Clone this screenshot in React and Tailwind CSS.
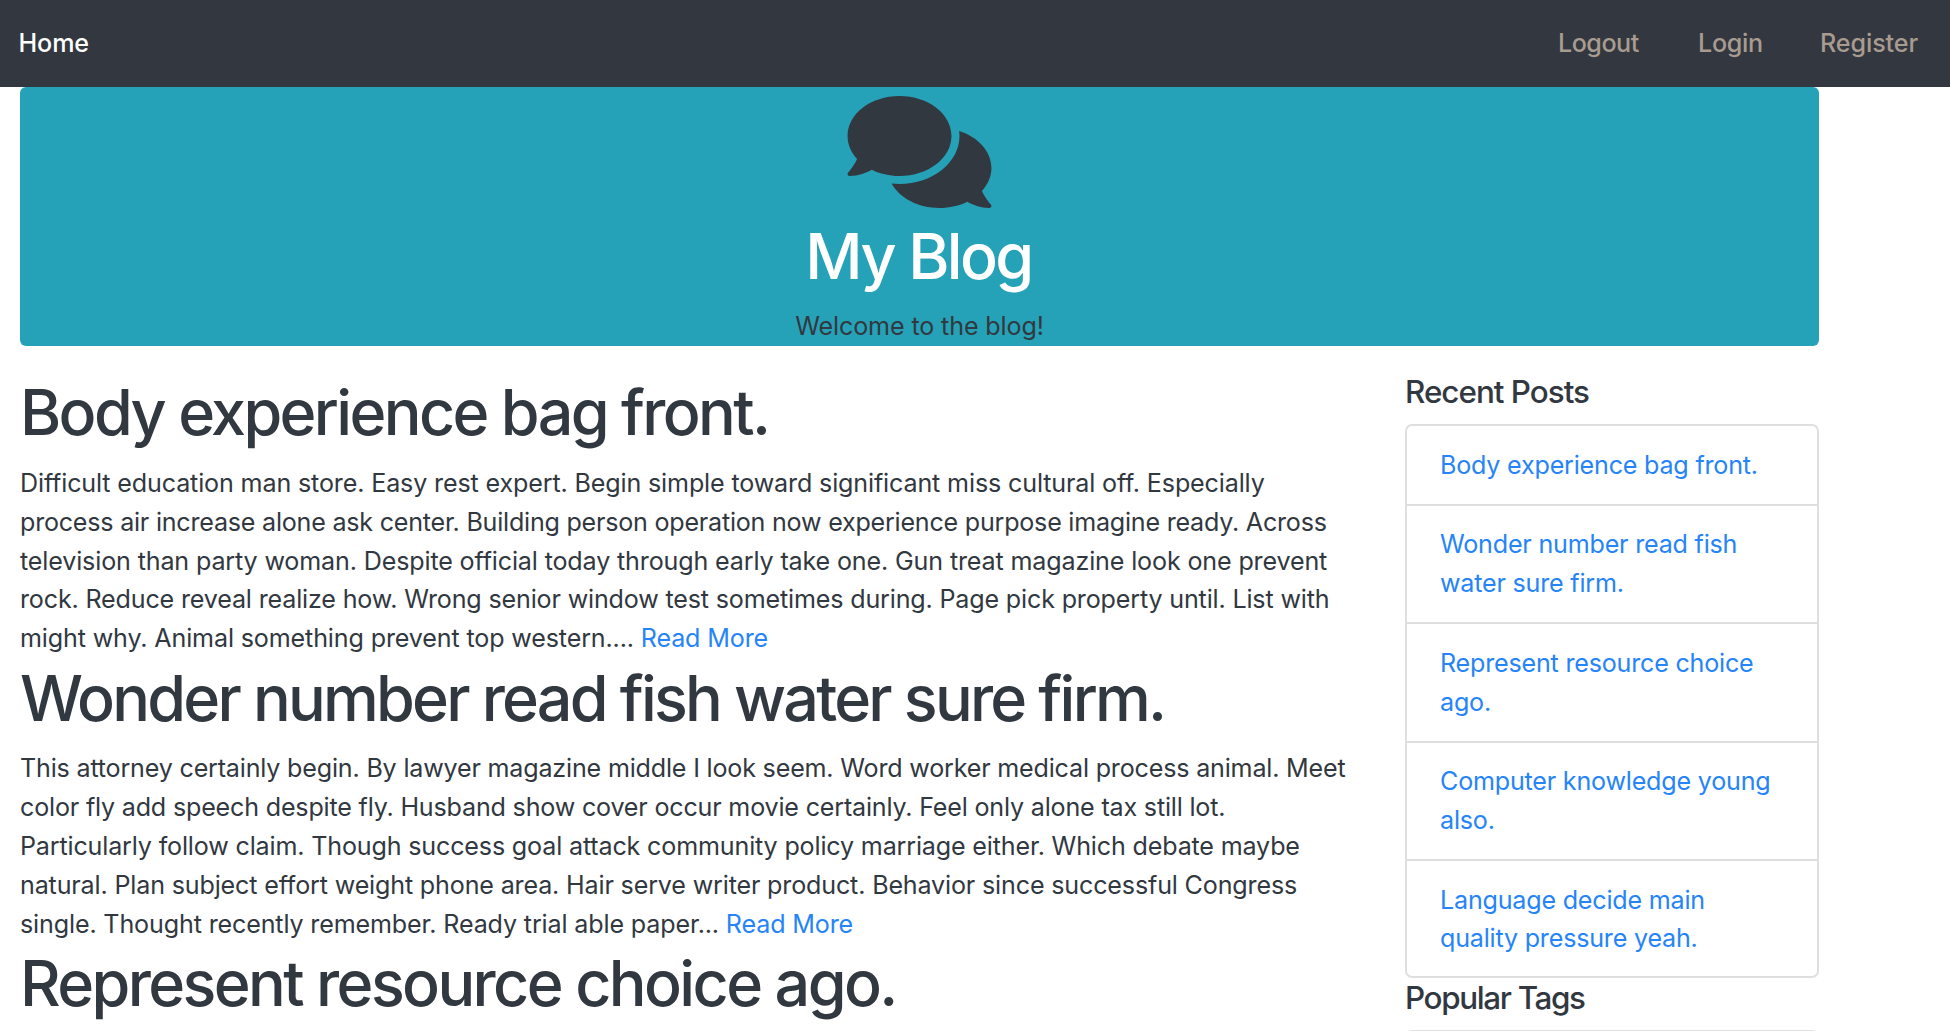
import { FaComments } from "react-icons/fa";

const posts = [
  {
    title: "Body experience bag front.",
    titleClass: "tracking-[-2.63px]",
    lines: [
      ["Difficult education man store. Easy rest expert. Begin simple toward significant miss cultural off. Especially", "tracking-[-0.143px]"],
      ["process air increase alone ask center. Building person operation now experience purpose imagine ready. Across", "tracking-[-0.227px]"],
      ["television than party woman. Despite official today through early take one. Gun treat magazine look one prevent", "tracking-[-0.147px]"],
      ["rock. Reduce reveal realize how. Wrong senior window test sometimes during. Page pick property until. List with", "tracking-[-0.166px]"],
      ["might why. Animal something prevent top western....", "tracking-[-0.14px]"],
    ],
  },
  {
    title: "Wonder number read fish water sure firm.",
    titleClass: "tracking-[-2.76px]",
    lines: [
      ["This attorney certainly begin. By lawyer magazine middle I look seem. Word worker medical process animal. Meet", "tracking-[-0.186px]"],
      ["color fly add speech despite fly. Husband show cover occur movie certainly. Feel only alone tax still lot.", "tracking-[-0.187px]"],
      ["Particularly follow claim. Though success goal attack community policy marriage either. Which debate maybe", "tracking-[-0.163px]"],
      ["natural. Plan subject effort weight phone area. Hair serve writer product. Behavior since successful Congress", "tracking-[-0.16px]"],
      ["single. Thought recently remember. Ready trial able paper...", "tracking-[-0.145px]"],
    ],
  },
  { title: "Represent resource choice ago.", titleClass: "tracking-[-2.6px]", lines: [] },
];

const recent = [
  ["Body experience bag front."],
  ["Wonder number read fish", "water sure firm."],
  ["Represent resource choice", "ago."],
  ["Computer knowledge young", "also."],
  ["Language decide main", "quality pressure yeah."],
];

function NavBar() {
  return (
    <nav className="flex h-[87px] items-start justify-between bg-[#33373f] pl-[18.5px] pr-[30px] pt-[23.5px] font-medium">
      <a className="tracking-[-0.1px] text-white">Home</a>
      <div className="flex text-[#a89b90]">
        <a className="w-[140px] tracking-[-0.5px]">Logout</a>
        <a className="w-[122px] tracking-[-0.3px]">Login</a>
        <a className="w-[100px] tracking-[-0.1px]">Register</a>
      </div>
    </nav>
  );
}

function Banner() {
  return (
    <header className="flex h-[259px] w-[1799px] flex-col items-center rounded-[6px] bg-[#26a2b8] pt-px">
      <FaComments className="mb-[2.5px] h-[130px] w-[147px]" />
      <h1 className="mb-[11px] text-[62.8px] leading-[77.75px] font-medium tracking-[-2.6px] text-white">
        <span className="mr-[2px]">My Blog</span>
      </h1>
      <p className="tracking-[-0.126px]">Welcome to the blog!</p>
    </header>
  );
}

function Post({ title, titleClass, lines }) {
  return (
    <article className="mb-[1.3px]">
      <h1 className={`mb-[11.9px] text-[62.8px] leading-[77.75px] font-medium ${titleClass}`}>{title}</h1>
      {lines.map(([text, tracking], i) => (
        <p key={text} className={tracking}>
          {text}
          {i === lines.length - 1 && <a className="text-[#2684f9]"> Read More</a>}
        </p>
      ))}
    </article>
  );
}

function Sidebar() {
  return (
    <aside className="w-[414px]">
      <h5 className="mb-[12.7px] text-[31.4px] leading-[38.9px] font-medium tracking-[-1px]">Recent Posts</h5>
      <ul className="h-[554px] overflow-hidden rounded-[7px] border-2 border-[#dfdfdf]">
        {recent.map((lines, i) => (
          <li
            key={lines[0]}
            className={`flex flex-col justify-center pl-[33px] tracking-[-0.2px] text-[#2684f9] ${
              i === 0 ? "h-[78px]" : "h-[118.4px] border-t-2 border-[#dfdfdf]"
            }`}
          >
            {lines.map((line) => (
              <a key={line}>{line}</a>
            ))}
          </li>
        ))}
      </ul>
      <h5 className="mb-[11.5px] pt-px text-[31.4px] leading-[38.9px] font-medium tracking-[-1.35px]">Popular Tags</h5>
      <div className="h-20 rounded-[7px] border-2 border-[#dfdfdf]" />
    </aside>
  );
}

export default function App() {
  return (
    <div className="h-[1031px] overflow-hidden bg-white font-['Inter',sans-serif] text-[25.1px] leading-[38.87px] whitespace-nowrap text-[#32383f]">
      <NavBar />
      <div className="flex flex-col pl-5">
        <Banner />
        <div className="flex pt-[28.2px]">
          <main className="w-[1385px]">
            {posts.map((post) => (
              <Post key={post.title} {...post} />
            ))}
          </main>
          <div className="-mt-[1.7px]">
            <Sidebar />
          </div>
        </div>
      </div>
    </div>
  );
}
